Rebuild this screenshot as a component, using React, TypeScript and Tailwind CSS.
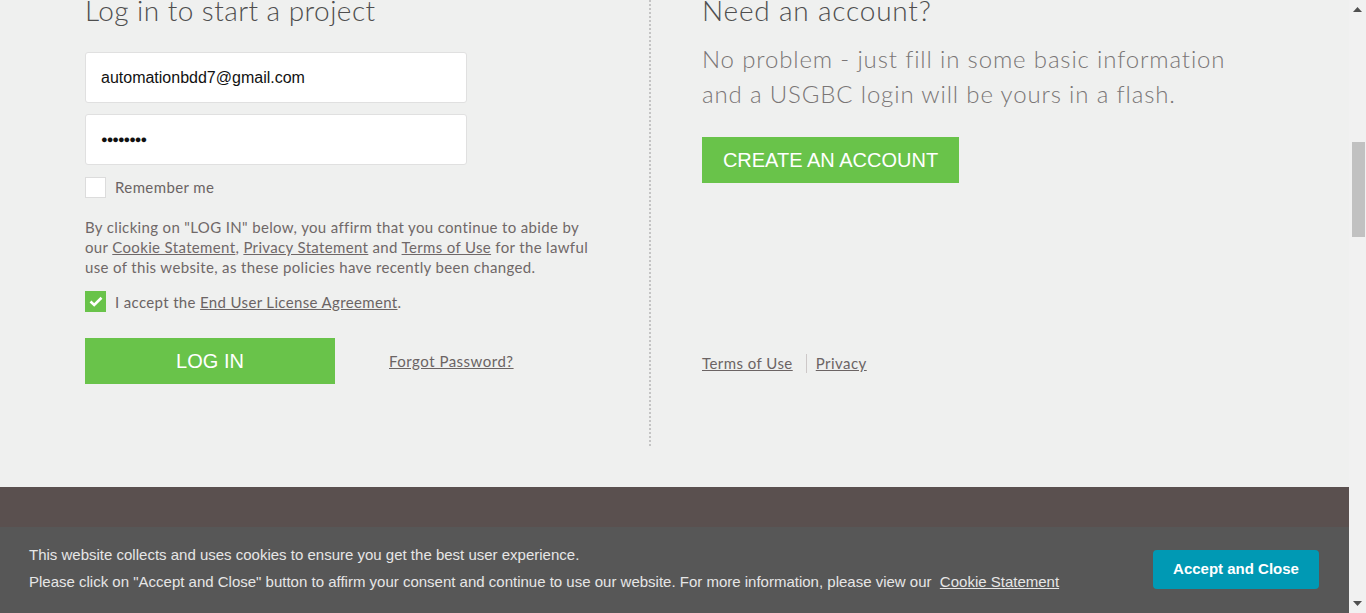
import React from "react";

const green = "bg-[#69c34a]";

function Scrollbar() {
  return (
    <div className="w-[17px] h-full bg-[#f1f1f1] flex flex-col items-center">
      <svg width="9" height="5" viewBox="0 0 9 5" className="mt-[7px]">
        <polygon points="0,5 9,5 4.5,0" fill="#505050" />
      </svg>
      <div className="mt-[130px] w-[13px] h-[95px] bg-[#c1c1c1] ml-[2px]" />
      <div className="flex-1" />
      <svg width="9" height="5" viewBox="0 0 9 5" className="mb-[7px]">
        <polygon points="0,0 9,0 4.5,5" fill="#505050" />
      </svg>
    </div>
  );
}

function Checkbox({ checked }: { checked?: boolean }) {
  if (checked) {
    return (
      <span className={`w-[21px] h-[21px] ${green} flex items-center justify-center`}>
        <svg width="14" height="11" viewBox="0 0 14 11">
          <path d="M1.5 5.5 L5.2 9 L12.5 1.8" stroke="#fff" strokeWidth="2.6" fill="none" />
        </svg>
      </span>
    );
  }
  return <span className="w-[21px] h-[21px] bg-white border border-[#dcdcdc]" />;
}

export default function App() {
  return (
    <div className="flex h-[613px] w-[1366px] overflow-hidden bg-[#eff0ef] font-['Lato',sans-serif]">
      <div className="relative flex-1 flex flex-col">
        <div className="flex">
          {/* login column */}
          <div className="w-[566px] ml-[85px] border-r-2 border-dotted border-[#c4c4c4] pb-[62px]">
            <h1 className="mt-[-7px] text-[28px] leading-[34px] font-light tracking-[0.45px] text-[#4e4e4e]">
              Log in to start a project
            </h1>
            <div className="mt-[25px] w-[382px] h-[51px] bg-white border border-[#e0e0e0] rounded-[3px] px-[15px] flex items-center font-['Liberation_Sans',Arial,sans-serif] text-[16px] text-[#111]">
              automationbdd7@gmail.com
            </div>
            <div className="mt-[11px] w-[382px] h-[51px] bg-white border border-[#e0e0e0] rounded-[3px] px-[15px] flex items-center font-['Liberation_Sans',Arial,sans-serif] text-[11px] tracking-[-1px] text-[#111]">
              ●●●●●●●●
            </div>
            <label className="mt-[11px] flex items-center gap-[9px]">
              <Checkbox />
              <span className="text-[15px] tracking-[0.4px] text-[#6b6464]">Remember me</span>
            </label>
            <p className="mt-[18px] w-[530px] text-[15px] leading-[20px] tracking-[0.35px] text-[#6f6868]">
              By clicking on "LOG IN" below, you affirm that you continue to abide by
              <br />
              our <a className="underline">Cookie Statement</a>, <a className="underline">Privacy Statement</a> and{" "}
              <a className="underline">Terms of Use</a> for the lawful
              <br />
              use of this website, as these policies have recently been changed.
            </p>
            <label className="mt-[14px] flex items-center gap-[9px]">
              <Checkbox checked />
              <span className="text-[15px] tracking-[0.35px] text-[#6b6464]">
                I accept the <a className="underline">End User License Agreement</a>.
              </span>
            </label>
            <div className="mt-[25px] flex items-center">
              <button
                className={`w-[250px] h-[46px] ${green} text-white text-[20px] font-['Liberation_Sans',Arial,sans-serif]`}
              >
                LOG IN
              </button>
              <a className="ml-[54px] text-[15px] tracking-[0.5px] underline text-[#6b6464]">Forgot Password?</a>
            </div>
          </div>

          {/* signup column */}
          <div className="pl-[51px] flex flex-col">
            <h2 className="mt-[-7px] text-[28px] leading-[34px] font-light tracking-[0.8px] text-[#4e4e4e]">
              Need an account?
            </h2>
            <p className="mt-[14px] text-[24px] leading-[35px] font-light tracking-[0.85px] text-[#7a7676] whitespace-nowrap">
              No problem - just fill in some basic information
              <br />
              and a USGBC login will be yours in a flash.
            </p>
            <button
              className={`mt-[26px] w-[257px] h-[46px] ${green} text-white text-[20px] font-['Liberation_Sans',Arial,sans-serif]`}
            >
              CREATE AN ACCOUNT
            </button>
            <div className="mt-[170px] flex items-center text-[15px] leading-[20px] tracking-[0.45px] text-[#6b6464]">
              <a className="underline">Terms of Use</a>
              <span className="ml-[13px] mr-[9px] w-px h-[19px] bg-[#cdc8c8]" />
              <a className="underline">Privacy</a>
            </div>
          </div>
        </div>

        <div className="mt-[41px] flex-1 bg-[#5a504f]" />

        {/* cookie banner */}
        <div className="absolute left-0 right-0 bottom-0 h-[86px] bg-[#575757] flex items-center justify-between pl-[29px] pr-[30px] font-['Liberation_Sans',Arial,sans-serif] text-[15px] text-[#e6e6e6]">
          <div className="flex flex-col gap-[9px] mb-[3px]">
            <p className="leading-[18px]">This website collects and uses cookies to ensure you get the best user experience.</p>
            <p className="leading-[18px]">
              Please click on "Accept and Close" button to affirm your consent and continue to use our website. For more
              information, please view our&nbsp; <a className="underline">Cookie Statement</a>
            </p>
          </div>
          <button className="w-[166px] h-[39px] rounded-[4px] bg-[#0099b4] text-white font-bold text-[15px] mb-[2px]">
            Accept and Close
          </button>
        </div>
      </div>
      <Scrollbar />
    </div>
  );
}
